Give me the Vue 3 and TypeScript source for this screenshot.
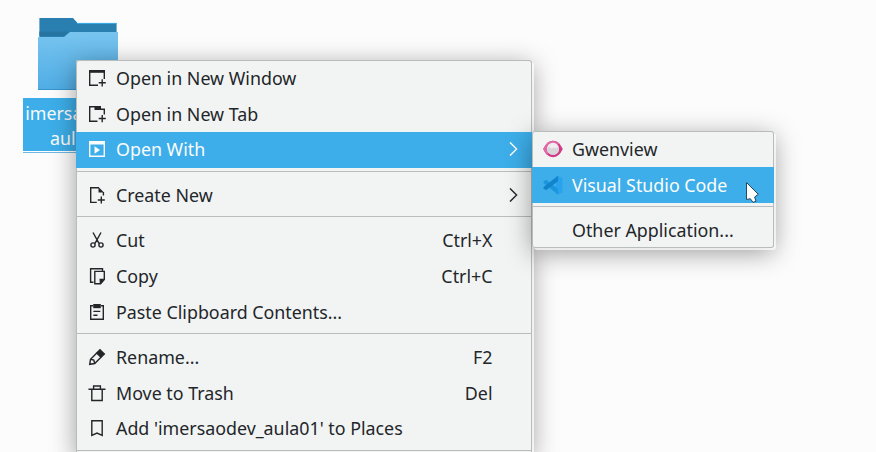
<script setup lang="ts">
interface Entry {
  label: string
  icon?: string
  shortcut?: string
  submenu?: boolean
  active?: boolean
  raised?: boolean
}

const mainGroups: Entry[][] = [
  [
    { label: 'Open in New Window', icon: 'window' },
    { label: 'Open in New Tab', icon: 'tab' },
    { label: 'Open With', icon: 'run', submenu: true, active: true, raised: true },
  ],
  [{ label: 'Create New', icon: 'create', submenu: true }],
  [
    { label: 'Cut', icon: 'cut', shortcut: 'Ctrl+X' },
    { label: 'Copy', icon: 'copy', shortcut: 'Ctrl+C' },
    { label: 'Paste Clipboard Contents...', icon: 'paste' },
  ],
  [
    { label: 'Rename...', icon: 'rename', shortcut: 'F2' },
    { label: 'Move to Trash', icon: 'trash', shortcut: 'Del' },
    { label: "Add 'imersaodev_aula01' to Places", icon: 'bookmark', raised: true },
  ],
  [],
]

const appGroups: Entry[][] = [
  [
    { label: 'Gwenview', icon: 'gwenview' },
    { label: 'Visual Studio Code', icon: 'code', active: true },
  ],
  [{ label: 'Other Application...' }],
]

const menus = [
  { name: 'main', groups: mainGroups },
  { name: 'apps', groups: appGroups },
]

// Monochrome action icons on an 18px grid: stroked outlines and filled parts.
const strokes: Record<string, string> = {
  window: 'M10 16.3H1.7V2M16.3 2V10M14.2 10.3V17.4M10.7 13.7H17.8',
  tab: 'M9.5 16.3H1.7V1.7H7M12 4.3H16.3V9.5M14.2 10V17.2M10.7 13.5H17.8',
  run: 'M1.7 2V16.3H16.3V2',
  create: 'M8.8 16.4H2.7V1.7H11M15.4 6V9.5M13.3 10.5V17.500M9.8 14H16.8',
  cut: 'M5 1.5L11 12.3M13 1.5L7 12.3M7.1 14A2.1 2.1 0 1 1 2.9 14A2.1 2.1 0 1 1 7.1 14M15.1 14A2.1 2.1 0 1 1 10.9 14A2.1 2.1 0 1 1 15.1 14',
  copy: 'M5.5 15.3H2.6V1.7H14.5V4M6.8 4.4H16.3V12.5L12.6 16.8H6.8Z',
  paste: 'M5 2.7H2.7V16.3H15.3V2.7H13M5.4 8.4H12.3M5.4 12.3H9.5',
  rename: 'M8.8 5L2.500 11.3L1.7 16.3L6.7 15.500L13 9.2M2.500 11.3L5.8 12.1L6.7 15.500',
  trash: 'M.5 5.3H17.5M5.600 5V2H12.400V5M3.8 5.5V16.500H14.2V5.5',
  bookmark: 'M3.8 1.7H14.2V16.3L9 14L3.8 16.3Z',
}
const fills: Record<string, string> = {
  window: 'M1 1H17V3.800H1Z',
  tab: 'M6.500 1H13V5H6.500Z',
  run: 'M1 1H17V4.5H1ZM6.5 6.3L12 10L6.5 13.8Z',
  create: 'M10.5 1L16 6.5H10.5Z',
  copy: 'M11.500 11.800H16.700L11.800 17.300Z',
  paste: 'M5.2 1H12.8V5.2H5.2Z',
  rename: 'M12 .7L17.300 6L13 10.300L7.700 5Z',
}
</script>

<template>
  <main class="desktop">
    <figure class="folder">
      <svg class="folder-art" width="80" height="74" viewBox="0 0 80 74">
        <defs>
          <linearGradient id="front" x1="0" y1="0" x2="0" y2="1">
            <stop offset="0" stop-color="#78c4ef" />
            <stop offset="1" stop-color="#4fade5" />
          </linearGradient>
        </defs>
        <path d="M1.4 1H35L39.5 6H78.6V30H1.4Z" fill="#2980b0" />
        <path d="M39 6.4H78.6" stroke="#3daee9" />
        <path d="M1.4 14.500H31L26 19H1.4Z" fill="#2674a1" />
        <path d="M0 20H26L32 15H80V73H0Z" fill="url(#front)" />
        <path d="M0 72.5H80" stroke="#3794ca" />
      </svg>
      <figcaption class="folder-name">imersaodev_<br />aula01</figcaption>
    </figure>

    <nav v-for="menu in menus" :key="menu.name" class="menu" :class="menu.name">
      <template v-for="(group, g) in menu.groups" :key="g">
        <hr v-if="g > 0" class="separator" />
        <div
          v-for="entry in group"
          :key="entry.label"
          class="entry"
          :class="{ active: entry.active, raised: entry.raised }"
        >
          <svg v-if="entry.icon === 'gwenview'" class="icon" viewBox="0 0 20 18">
            <path d="M.2 9Q4 .8 10 .8T19.800 9Q16 17.200 10 17.200T.2 9Z" fill="#d23a88" />
            <path d="M.2 9Q4 .8 10 .8Q14 .8 17 4Q8 3 4 15Q2 13 .2 9Z" fill="#e06aa6" />
            <circle cx="10" cy="8.800" r="6" fill="#f0eef0" />
            <path d="M4 9.500L6 6.500L8 8.500L11 7.500L13 8.500L15 6.500L16 9.500A6 5.300 0 0 1 4 9.500Z" fill="#d6d5d7" />
          </svg>
          <svg v-else-if="entry.icon === 'code'" class="icon" viewBox="0 0 20 18">
            <path d="M14.500 -.3L19.500 2V16.500L14.500 18.800L13 17V1Z" fill="#2ba2ee" />
            <path d="M.5 5.500L3 3.800L15 12.800V18.600L.5 7Z" fill="#1b95dc" />
            <path d="M.5 12.500L3 14.200L15 5.200V-.3L.5 11Z" fill="#1284cb" />
          </svg>
          <svg v-else-if="entry.icon" class="icon" viewBox="0 0 18 18">
            <path :d="strokes[entry.icon]" class="outline" />
            <path :d="fills[entry.icon]" fill="currentColor" />
          </svg>
          <span v-else class="icon" />
          <span class="label">{{ entry.label }}</span>
          <span v-if="entry.shortcut" class="shortcut">{{ entry.shortcut }}</span>
          <svg v-if="entry.submenu" class="chevron" viewBox="0 0 9 14">
            <path d="M1 .4L7.600 7L1 13.600" class="outline" />
          </svg>
        </div>
      </template>
    </nav>

    <svg class="pointer" width="15" height="23" viewBox="0 0 15 23">
      <path
        d="M1.500 1.500L13.300 13.300L9.600 16L11 20.300L8 21.300L5.300 17.700L1.500 18.500Z"
        fill="#fff"
        stroke="#244a5c"
        stroke-linejoin="round"
      />
    </svg>
  </main>
</template>

<style>
body {
  margin: 0;
  overflow: hidden;
}
</style>

<style scoped>
.desktop {
  position: relative;
  width: 876px;
  height: 452px;
  overflow: hidden;
  background: #fcfcfc;
  font-family: 'Noto Sans', sans-serif;
  font-size: 17.84px;
  color: #232629;
}

.folder {
  position: absolute;
  left: 23px;
  top: 17px;
  width: 110px;
  margin: 0;
  display: flex;
  flex-direction: column;
  align-items: center;
  gap: 7px;
}

.folder-art {
  display: block;
}

.folder-name {
  width: 110px;
  height: 53px;
  padding-top: 3px;
  box-sizing: border-box;
  box-shadow: 0 1px #fff, 0 2px #6fb8e3;
  background: #3daee9;
  color: #fcfcfc;
  text-align: center;
  line-height: 25px;
}

.menu {
  position: absolute;
  border-radius: 3px;
  background: #f2f4f4;
  box-shadow:
    inset 0 0 0 1px #b9bcbc,
    2px 2px 0 rgba(255, 255, 255, 0.7),
    0 5px 26px rgba(0, 0, 0, 0.38);
}

.main {
  left: 76px;
  top: 60px;
  width: 456px;
}

.apps {
  left: 532px;
  top: 131px;
  width: 242px;
}

.entry {
  display: flex;
  align-items: center;
  height: 36px;
  box-sizing: border-box;
  padding: 0 14px 0 12px;
  white-space: nowrap;
}

.apps .entry {
  padding-left: 11px;
}

.raised {
  padding-bottom: 2px;
}

.active {
  background: #3daee9;
  color: #fcfcfc;
}

.separator {
  height: 1px;
  margin: 3px 1px 5px;
  border: 0;
  background: #b9bcbc;
}

.icon {
  flex: none;
  width: 18px;
  height: 18px;
  margin-right: 10px;
  overflow: visible;
}

.apps .icon {
  width: 20px;
  margin-right: 9px;
}

.outline {
  fill: none;
  stroke: currentColor;
  stroke-width: 1.4;
}

.label {
  flex: 1;
}

.shortcut {
  margin-right: 25.5px;
}

.chevron {
  width: 9px;
  height: 14px;
}

.pointer {
  position: absolute;
  left: 745px;
  top: 181px;
}
</style>
